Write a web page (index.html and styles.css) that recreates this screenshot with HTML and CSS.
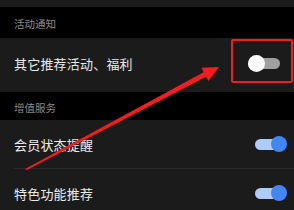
FILE: index.html
```html
<!DOCTYPE html>
<html lang="zh">
<head>
<meta charset="utf-8">
<link rel="stylesheet" href="styles.css">
</head>
<body>
<div class="page">
  <div class="top-strip"></div>
  <div class="section-header first">活动通知</div>
  <div class="card">
    <div class="row tall">
      <span class="label">其它推荐活动、福利</span>
      <div class="toggle off"><span class="track"></span><span class="knob"></span></div>
      <div class="highlight-box"></div>
    </div>
  </div>
  <div class="section-header second">增值服务</div>
  <div class="card">
    <div class="row">
      <span class="label">会员状态提醒</span>
      <div class="toggle on"><span class="track"></span><span class="knob"></span></div>
    </div>
    <div class="divider"></div>
    <div class="row">
      <span class="label">特色功能推荐</span>
      <div class="toggle on"><span class="track"></span><span class="knob"></span></div>
    </div>
  </div>
  <svg class="arrow" width="294" height="210" viewBox="0 0 294 210">
    <polygon fill="#f41c1c" points="25,169 27,170 206,76.7 208.5,81 219,67 201.5,67.8 203.6,72.3"/>
  </svg>
</div>
</body>
</html>
```
FILE: styles.css
```css
html, body {
  margin: 0;
  padding: 0;
  background: #000;
}
body {
  font-family: "Noto Sans CJK SC", "Noto Sans", sans-serif;
  width: 294px;
  height: 210px;
  overflow: hidden;
}
.page {
  position: relative;
  width: 294px;
  height: 210px;
  overflow: hidden;
}
.top-strip {
  height: 7px;
  background: #1b1b1b;
}
.section-header {
  display: flex;
  align-items: center;
  padding-left: 14px;
  font-size: 10.5px;
  color: #8a8a8a;
  box-sizing: border-box;
}
.section-header.first {
  height: 31px;
  padding-top: 2px;
}
.section-header.second {
  height: 28px;
  padding-top: 3px;
}
.card {
  background: #1b1b1b;
}
.row {
  position: relative;
  display: flex;
  align-items: center;
  justify-content: space-between;
  height: 48px;
  padding-left: 14px;
  padding-right: 7px;
}
.row.tall {
  height: 54px;
  padding-right: 14px;
}
.label {
  font-size: 13px;
  color: #ececec;
  letter-spacing: 0.2px;
}
.row.tall .label {
  margin-top: -4px;
}
.divider {
  height: 1px;
  margin-left: 14px;
  background: #2a2a2a;
}
.toggle {
  position: relative;
  width: 32px;
  height: 17px;
}
.toggle .track {
  position: absolute;
  top: 3px;
  height: 11px;
  border-radius: 6px;
}
.toggle .knob {
  position: absolute;
  top: 0;
  width: 17px;
  height: 17px;
  border-radius: 50%;
}
.toggle.off {
  margin-top: -3px;
}
.toggle.off .track {
  left: 0;
  width: 32px;
  background: #a0a0a0;
}
.toggle.off .knob {
  left: 0;
  background: #ffffff;
}
.toggle.on .track {
  left: 0;
  width: 27px;
  background: #aecbfa;
}
.toggle.on .knob {
  right: 0;
  width: 16px;
  height: 16px;
  background: #4285f4;
}
.highlight-box {
  position: absolute;
  top: 1px;
  right: 1px;
  width: 58px;
  height: 40px;
  border: 2px solid #f21d1d;
  border-radius: 2px;
}
.arrow {
  position: absolute;
  left: 0;
  top: 0;
}
```
